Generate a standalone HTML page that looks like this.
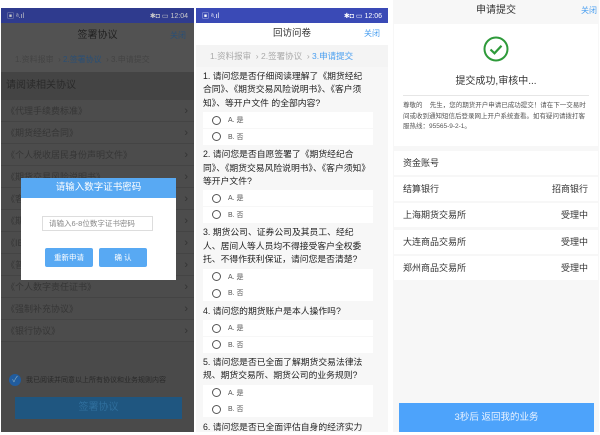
<!DOCTYPE html>
<html><head><meta charset="utf-8"><style>
*{margin:0;padding:0;box-sizing:border-box}
body{width:600px;height:435px;background:#fff;position:relative;overflow:hidden;font-family:"Liberation Sans","Noto Sans CJK SC",sans-serif}
.a{position:absolute}
.p1{left:1px;top:8px;width:193px;height:424px;background:#4a4a4a;overflow:hidden}
.sb{height:15px;font-size:7px;color:#fff;display:flex;justify-content:space-between;align-items:center;padding:0 6px}
.row1{height:22px;border-bottom:1px solid #444;color:#363636;font-size:9px;line-height:22px;padding-left:5px;position:relative}
.row1:after{content:"›";position:absolute;right:6px;top:0;font-size:11px;color:#333}
.p2{left:196px;top:8px;width:192px;height:424px;background:#f7f7f7;overflow:hidden}
.q{font-size:8.8px;line-height:13.4px;color:#222;padding:3px 19px 2px 7px}
.op{margin:0 15px 0.5px 7px;background:#fff;height:16px;display:flex;align-items:center;font-size:7px;color:#555}
.op i{display:inline-block;width:9px;height:9px;border:1.2px solid #555;border-radius:50%;margin:0 7px 0 9px}
.p3{left:393px;top:0;width:206px;height:432px;background:#f7f7f7}
.r3{position:absolute;left:1px;width:204px;height:24px;background:#fff;font-size:9px;color:#333;line-height:24px;padding:0 10px 0 9px;display:flex;justify-content:space-between}
</style></head><body>

<div class="a p1">
 <div class="sb" style="background:#2f3b8e;color:#ccc"><span>▣ ᵃ.ıl</span><span>✱◘ ▭ 12:04</span></div>
 <div style="height:25px;background:#525252;position:relative;text-align:center;font-size:10px;color:#222;line-height:25px">签署协议<span class="a" style="right:8px;top:0;color:#2a4f75;font-size:8px">关闭</span></div>
 <div style="height:24px;background:#525252;font-size:8px;color:#444;line-height:24px;padding-left:14px">1.资料报审 &nbsp;› <span style="color:#2a4f75">2.签署协议</span> &nbsp;› 3.申请提交</div>
 <div style="height:28px;background:#444;font-size:10px;color:#2a2a2a;line-height:28px;padding-left:5px">请阅读相关协议</div>
 <div style="background:#4c4c4c">
 <div class="row1">《代理手续费标准》</div>
 <div class="row1">《期货经纪合同》</div>
 <div class="row1">《个人税收居民身份声明文件》</div>
 <div class="row1">《期货交易风险说明书》</div>
 <div class="row1">《客户须知》</div>
 <div class="row1">《期货市场风险提示》</div>
 <div class="row1">《IB业务协议》</div>
 <div class="row1">《普通投资者适当性匹配意见告知书》</div>
 <div class="row1">《个人数字责任证书》</div>
 <div class="row1">《强制补充协议》</div>
 <div class="row1">《银行协议》</div>
 </div>
 <div class="a" style="left:8px;top:366px;width:12px;height:12px;border-radius:50%;background:#215c9e;color:#8ab;font-size:8px;text-align:center;line-height:12px">✓</div>
 <div class="a" style="left:25px;top:367px;font-size:7px;color:#2a2a2a">我已阅读并同意以上所有协议和业务规则内容</div>
 <div class="a" style="left:14px;top:389px;width:167px;height:22px;background:#1f5680;color:#2f6e9c;font-size:10px;text-align:center;line-height:22px">签署协议</div>
</div>

<div class="a" style="left:21px;top:178px;width:155px;height:102px;background:#fff">
 <div style="height:20px;background:#58a9f3;color:#fff;font-size:9.5px;text-align:center;line-height:20px">请输入数字证书密码</div>
 <div class="a" style="left:21px;top:38px;width:111px;height:15px;border:1px solid #ddd;font-size:7.5px;color:#888;line-height:13px;padding-left:6px">请输入6-8位数字证书密码</div>
 <div class="a" style="left:24px;top:70px;width:48px;height:19px;background:#58a9f3;color:#fff;font-size:7.5px;text-align:center;line-height:19px;border-radius:2px">重新申请</div>
 <div class="a" style="left:78px;top:70px;width:48px;height:19px;background:#58a9f3;color:#fff;font-size:7.5px;text-align:center;line-height:19px;border-radius:2px">确 认</div>
</div>

<div class="a p2">
 <div class="sb" style="background:#3a4ab6"><span>▣ ᵃ.ıl</span><span>✱◘ ▭ 12:06</span></div>
 <div style="height:22px;background:#fff;position:relative;text-align:center;font-size:9.5px;color:#333;line-height:22px">回访问卷<span class="a" style="right:8px;top:0;color:#4a9ff0;font-size:8px">关闭</span></div>
 <div style="height:22px;background:#f4f4f4;font-size:8.5px;color:#aaa;line-height:22px;padding-left:14px">1.资料报审 &nbsp;› 2.签署协议 &nbsp;› <span style="color:#4a9ff0">3.申请提交</span></div>
 <div class="q">1. 请问您是否仔细阅读理解了《期货经纪合同》、《期货交易风险说明书》、《客户须知》、等开户文件 的全部内容?</div>
 <div class="op"><i></i>A. 是</div><div class="op"><i></i>B. 否</div>
 <div class="q">2. 请问您是否自愿签署了《期货经纪合同》、《期货交易风险说明书》、《客户须知》等开户文件?</div>
 <div class="op"><i></i>A. 是</div><div class="op"><i></i>B. 否</div>
 <div class="q">3. 期货公司、证券公司及其员工、经纪人、居间人等人员均不得接受客户全权委托、不得作获利保证，请问您是否清楚?</div>
 <div class="op"><i></i>A. 是</div><div class="op"><i></i>B. 否</div>
 <div class="q">4. 请问您的期货账户是本人操作吗?</div>
 <div class="op"><i></i>A. 是</div><div class="op"><i></i>B. 否</div>
 <div class="q">5. 请问您是否已全面了解期货交易法律法规、期货交易所、期货公司的业务规则?</div>
 <div class="op"><i></i>A. 是</div><div class="op"><i></i>B. 否</div>
 <div class="q">6. 请问您是否已全面评估自身的经济实力</div>
</div>

<div class="a p3">
 <div style="height:24px;text-align:center;font-size:10px;color:#333;line-height:22px;position:relative">申请提交<span class="a" style="right:2px;top:0;color:#4a9ff0;font-size:8px">关闭</span></div>
 <div class="a" style="left:1px;top:24px;width:204px;height:122px;background:#fff">
  <svg class="a" style="left:89px;top:12px" width="26" height="26" viewBox="0 0 26 26"><circle cx="13" cy="13" r="11.5" fill="none" stroke="#2e9a3a" stroke-width="2"/><path d="M7.5 13.5l4 3.8 7-7.5" fill="none" stroke="#2e9a3a" stroke-width="2.2"/></svg>
  <div class="a" style="left:0;top:48px;width:204px;text-align:center;font-size:10px;color:#333">提交成功,审核中...</div>
  <div class="a" style="left:9px;top:71px;width:186px;height:1px;background:#e6e6e6"></div>
  <div class="a" style="left:9px;top:77px;width:188px;font-size:6.5px;line-height:10.5px;color:#555">尊敬的&nbsp;&nbsp;&nbsp;&nbsp;先生，您的期货开户申请已成功提交！请在下一交易时间或收到通知短信后登录网上开户系统查看。如有疑问请拨打客服热线：95565-9-2-1。</div>
 </div>
 <div class="r3" style="top:151px"><span>资金账号</span><span></span></div>
 <div class="r3" style="top:177px"><span>结算银行</span><span>招商银行</span></div>
 <div class="r3" style="top:203px"><span>上海期货交易所</span><span>受理中</span></div>
 <div class="r3" style="top:230px"><span>大连商品交易所</span><span>受理中</span></div>
 <div class="r3" style="top:256px"><span>郑州商品交易所</span><span>受理中</span></div>
 <div class="a" style="left:6px;top:403px;width:195px;height:29px;background:#4da3fb;color:#e8f2ff;font-size:9.5px;text-align:center;line-height:29px">3秒后 返回我的业务</div>
</div>
</body></html>
